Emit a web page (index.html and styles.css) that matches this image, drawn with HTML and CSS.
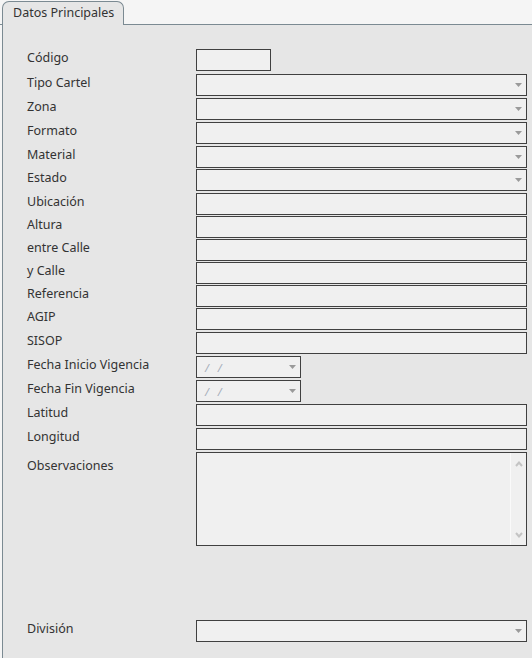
FILE: index.html
```html
<!DOCTYPE html>
<html lang="es">
<head>
<meta charset="utf-8">
<link rel="stylesheet" href="styles.css">
</head>
<body>
<div class="tabbar">
  <div class="tab">Datos Principales</div>
</div>
<div class="panel">
  <div class="row first"><span class="lbl">Código</span><div class="fld short"></div></div>
  <div class="row loose"><span class="lbl">Tipo Cartel</span><div class="fld sel"><svg class="arr" width="7" height="4" viewBox="0 0 7 4"><polygon points="0,0 7,0 3.5,4"/></svg></div></div>
  <div class="row"><span class="lbl">Zona</span><div class="fld sel"><svg class="arr" width="7" height="4" viewBox="0 0 7 4"><polygon points="0,0 7,0 3.5,4"/></svg></div></div>
  <div class="row"><span class="lbl">Formato</span><div class="fld sel"><svg class="arr" width="7" height="4" viewBox="0 0 7 4"><polygon points="0,0 7,0 3.5,4"/></svg></div></div>
  <div class="row"><span class="lbl">Material</span><div class="fld sel"><svg class="arr" width="7" height="4" viewBox="0 0 7 4"><polygon points="0,0 7,0 3.5,4"/></svg></div></div>
  <div class="row tight"><span class="lbl">Estado</span><div class="fld sel"><svg class="arr" width="7" height="4" viewBox="0 0 7 4"><polygon points="0,0 7,0 3.5,4"/></svg></div></div>
  <div class="row"><span class="lbl">Ubicación</span><div class="fld"></div></div>
  <div class="row tight"><span class="lbl">Altura</span><div class="fld"></div></div>
  <div class="row tight"><span class="lbl">entre Calle</span><div class="fld"></div></div>
  <div class="row tight"><span class="lbl">y Calle</span><div class="fld"></div></div>
  <div class="row tight"><span class="lbl">Referencia</span><div class="fld"></div></div>
  <div class="row tight"><span class="lbl">AGIP</span><div class="fld"></div></div>
  <div class="row"><span class="lbl">SISOP</span><div class="fld"></div></div>
  <div class="row"><span class="lbl">Fecha Inicio Vigencia</span><div class="fld date"><span class="dt">/&nbsp;&nbsp;/</span><svg class="arr" width="7" height="4" viewBox="0 0 7 4"><polygon points="0,0 7,0 3.5,4"/></svg></div></div>
  <div class="row"><span class="lbl">Fecha Fin Vigencia</span><div class="fld date"><span class="dt">/&nbsp;&nbsp;/</span><svg class="arr" width="7" height="4" viewBox="0 0 7 4"><polygon points="0,0 7,0 3.5,4"/></svg></div></div>
  <div class="row"><span class="lbl">Latitud</span><div class="fld"></div></div>
  <div class="row"><span class="lbl">Longitud</span><div class="fld"></div></div>
  <div class="row"><span class="lbl obs-lbl">Observaciones</span>
    <div class="fld area">
      <div class="sbar">
        <svg width="8" height="6" viewBox="0 0 8 6"><polyline points="1,5 4,1.5 7,5" fill="none" stroke="#c4c4c4" stroke-width="2"/></svg>
        <svg width="8" height="6" viewBox="0 0 8 6"><polyline points="1,1 4,4.5 7,1" fill="none" stroke="#c4c4c4" stroke-width="2"/></svg>
      </div>
    </div>
  </div>
  <div class="row div-row"><span class="lbl">División</span><div class="fld sel"><svg class="arr" width="7" height="4" viewBox="0 0 7 4"><polygon points="0,0 7,0 3.5,4"/></svg></div></div>
</div>
</body>
</html>
```
FILE: styles.css
```css
html, body {
  margin: 0;
  padding: 0;
  height: 100%;
}
body {
  background: #f5f5f5;
  font-family: "Noto Sans", "DejaVu Sans", sans-serif;
  font-size: 12.5px;
  color: #333;
  display: flex;
  flex-direction: column;
}
.tabbar {
  height: 24px;
  border-bottom: 1px solid #7b8a92;
  display: flex;
  align-items: flex-end;
  padding-left: 2px;
}
.tab {
  width: 122px;
  height: 24px;
  margin-bottom: -1px;
  border: 1px solid #7b8a92;
  border-bottom: none;
  border-radius: 7px 7px 0 0;
  background: #e6e6e6;
  padding-left: 10px;
  box-sizing: border-box;
  line-height: 22px;
  color: #333;
}
.panel {
  flex: 1;
  margin-left: 2px;
  border-left: 1px solid #7b8a92;
  background: #e6e6e6;
  padding-left: 24px;
  padding-top: 24px;
}
.row {
  display: flex;
  align-items: flex-start;
  margin-top: 2px;
}
.row.first { margin-top: 0; }
.row.loose { margin-top: 3px; }
.row.tight { margin-top: 1px; }
.row.div-row { margin-top: 74px; }
.lbl {
  width: 169px;
  flex: none;
  line-height: 16px;
  padding-top: 1px;
}
.obs-lbl { padding-top: 6px; }
.fld {
  width: 331px;
  height: 22px;
  box-sizing: border-box;
  border: 1px solid #404040;
  background: #f0f0f0;
  display: flex;
  align-items: center;
  justify-content: flex-end;
  padding-right: 4px;
}
.fld.short { width: 75px; }
.fld.date {
  width: 105px;
  justify-content: space-between;
  padding-left: 8px;
}
.dt {
  color: #a3acb8;
  font-size: 11px;
  font-style: italic;
  letter-spacing: 1px;
}
.arr { fill: #9a9a9a; display: block; }
.fld.area {
  height: 94px;
  padding-right: 0;
  align-items: stretch;
}
.sbar {
  width: 16px;
  border-left: 1px solid #fafafa;
  display: flex;
  flex-direction: column;
  justify-content: space-between;
  align-items: center;
  padding: 8px 0 7px;
  box-sizing: border-box;
}
.sbar svg { display: block; }
```
